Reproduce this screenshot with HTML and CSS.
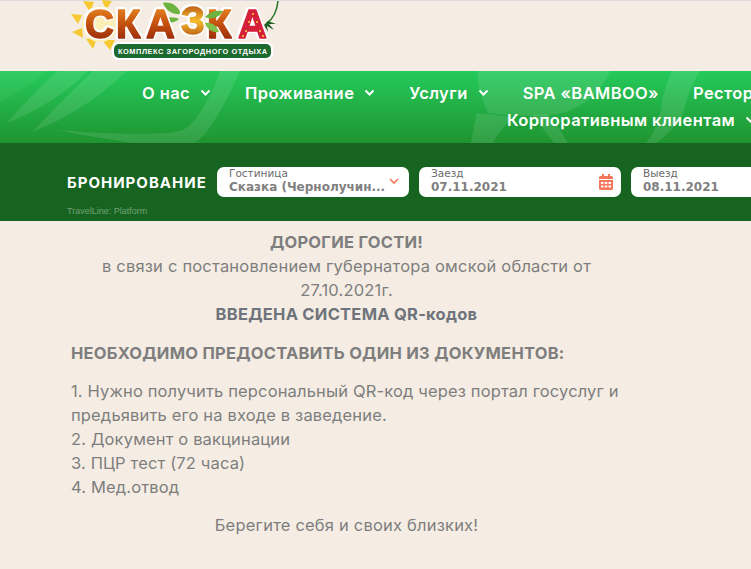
FILE: index.html
```html
<!DOCTYPE html>
<html lang="ru">
<head>
    <meta charset="UTF-8">
    <meta name="viewport" content="width=device-width, initial-scale=1.0">
    <title>Сказка</title>
    <link rel="stylesheet" href="styles.css">
</head>
<body>
    <div class="page">
        <!-- Logo -->
        <header class="top">
            <svg class="logo" width="215" height="64" viewBox="68 0 215 64">
                <defs>
                    <linearGradient id="letter" x1="0" y1="0" x2="0" y2="1">
                        <stop offset="0" stop-color="#f09226"/>
                        <stop offset="0.5" stop-color="#c4500f"/>
                        <stop offset="1" stop-color="#8a1f08"/>
                    </linearGradient>
                    <linearGradient id="three" x1="0" y1="0" x2="0" y2="1">
                        <stop offset="0" stop-color="#a83a10"/>
                        <stop offset="0.5" stop-color="#f5bd2c"/>
                        <stop offset="1" stop-color="#a83a10"/>
                    </linearGradient>
                </defs>
                <!-- sun -->
                <g fill="#f7c830">
                    <path d="M83 1l11 1-4 10z"/>
                    <path d="M102 0l10 1-6 9z"/>
                    <path d="M71 14l11 1-4 9z"/>
                    <path d="M72 32l10-4 1 10z"/>
                    <path d="M86 39l7 10 4-11z"/>
                    <path d="M102 40l8 10 5-10z"/>
                </g>
                <circle cx="100" cy="24" r="18" fill="#fdeeb8"/>
                <!-- branch -->
                <path d="M278 1c-1 10-4 17-11 22" fill="none" stroke="#2f7a2e" stroke-width="1.6"/>
                <path d="M268 21l8 3-7 0 5 6-7-4 1 6-4-7z" fill="#1f5f26"/>
                <!-- leaves behind the З -->
                <path d="M163 3c8-2 15 3 18 11-8 1-15-3-18-11z" fill="#6db33f"/>
                <path d="M163 20c6-4 12-3 16-1-4 4-11 5-16 1z" fill="#6db33f"/>
                <!-- letters -->
                <g class="logo-letters">
                    <text x="85" y="38" fill="url(#letter)" stroke="url(#letter)" textLength="28">С</text>
                    <text x="116" y="38" fill="url(#letter)" stroke="url(#letter)" textLength="27">К</text>
                    <text x="146" y="38" fill="url(#letter)" stroke="url(#letter)" textLength="31">А</text>
                    <text class="logo-three" x="181" y="34" fill="url(#three)" stroke="url(#three)" textLength="22">З</text>
                    <text x="207" y="38" fill="url(#letter)" stroke="url(#letter)" textLength="29">К</text>
                    <text x="238" y="38" fill="#d5203a" stroke="#d5203a" textLength="30">А</text>
                </g>
                <path d="M205 17c6-6 12-7 18-6-3 6-11 9-18 6z" fill="#6db33f"/>
                <path d="M205 23c7-1 12 3 14 9-7 1-12-3-14-9z" fill="#7fc04a"/>
                <g fill="#f6d53c">
                    <circle cx="253" cy="14" r="1"/>
                    <circle cx="249" cy="22" r="1"/>
                    <circle cx="257" cy="22" r="1"/>
                    <circle cx="246" cy="31" r="1"/>
                    <circle cx="260" cy="31" r="1"/>
                    <circle cx="243" cy="36" r="1"/>
                    <circle cx="263" cy="36" r="1"/>
                </g>
                <!-- badge -->
                <rect x="112" y="42" width="161" height="18" rx="6" fill="#fff"/>
                <rect x="114" y="44" width="157" height="14" rx="5" fill="#1d6a30"/>
                <text class="logo-sub" x="118" y="54" textLength="149">КОМПЛЕКС ЗАГОРОДНОГО ОТДЫХА</text>
            </svg>
        </header>

        <!-- Menu -->
        <nav class="menu">
            <svg class="menu-leaves" width="751" height="72" viewBox="0 0 751 72">
                <g fill="#fff" fill-opacity="0.1">
                    <path d="M0 0H48C30 14 14 24 0 32z" fill-opacity="0.05"/>
                    <path d="M7 52C26 30 42 14 58 0h30C66 22 38 40 7 52z"/>
                    <path d="M32 61C54 38 74 18 93 0h34C100 26 66 48 32 61z"/>
                    <path d="M57 59c50 4 110 6 126 0 8-4 14-12 20-22 8-14 14-26 17-37h20c-8 18-18 38-26 50-6 10-12 18-20 22h-62C108 68 80 64 57 59z"/>
                    <path d="M478 0h132c-8 20-28 40-58 44-24 2-48 0-64-2-6-14-12-28-10-42z"/>
                    <path d="M471 72c2-12 4-22 6-30l36 4c-8 8-16 18-20 26z"/>
                    <path d="M532 44c8 10 16 20 22 28h14c-6-10-12-20-20-29z"/>
                    <path d="M672 0h28c-8 14-14 28-16 40-4 10-16 24-28 32h-10c8-10 14-22 16-40 2-12 6-24 10-32z"/>
                </g>
            </svg>
            <ul class="menu-row menu-row-first">
                <li class="menu-item">О нас <svg class="chev" width="11" height="8" viewBox="0 0 11 8"><path d="M1.500 1.500l4 4 4-4" fill="none" stroke="#fff" stroke-width="2"/></svg></li>
                <li class="menu-item">Проживание <svg class="chev" width="11" height="8" viewBox="0 0 11 8"><path d="M1.500 1.500l4 4 4-4" fill="none" stroke="#fff" stroke-width="2"/></svg></li>
                <li class="menu-item">Услуги <svg class="chev" width="11" height="8" viewBox="0 0 11 8"><path d="M1.500 1.500l4 4 4-4" fill="none" stroke="#fff" stroke-width="2"/></svg></li>
                <li class="menu-item">SPA «BAMBOO»</li>
                <li class="menu-item">Ресторан</li>
            </ul>
            <ul class="menu-row menu-row-second">
                <li class="menu-item">Корпоративным клиентам <svg class="chev" width="11" height="8" viewBox="0 0 11 8"><path d="M1.500 1.500l4 4 4-4" fill="none" stroke="#fff" stroke-width="2"/></svg></li>
            </ul>
        </nav>

        <!-- Booking -->
        <section class="booking">
            <div class="booking-row">
                <div class="booking-title">БРОНИРОВАНИЕ</div>
                <div class="field field-hotel">
                    <div class="field-label">Гостиница</div>
                    <div class="field-value">Сказка (Чернолучин...</div>
                    <svg class="field-icon" width="10" height="7" viewBox="0 0 10 7"><path d="M1 1l4 4 4-4" fill="none" stroke="#f4775a" stroke-width="1.600"/></svg>
                </div>
                <div class="field field-in">
                    <div class="field-label">Заезд</div>
                    <div class="field-value">07.11.2021</div>
                    <svg class="field-icon" width="14" height="16" viewBox="0 0 14 16">
                        <path fill="#f4775a" d="M3 0h2v2h4V0h2v2h1.500A1.500 1.500 0 0 1 14 3.500V5H0V3.500A1.500 1.500 0 0 1 1.500 2H3zM0 6h14v8.500a1.500 1.500 0 0 1-1.500 1.500h-11A1.500 1.500 0 0 1 0 14.500z"/>
                        <path fill="#fff" d="M2 8h2.500v2H2zM5.800 8h2.500v2H5.800zM9.500 8H12v2H9.500zM2 11.500h2.500v2H2zM5.800 11.500h2.500v2H5.800zM9.500 11.500H12v2H9.500z"/>
                    </svg>
                </div>
                <div class="field field-out">
                    <div class="field-label">Выезд</div>
                    <div class="field-value">08.11.2021</div>
                </div>
            </div>
            <div class="booking-credit">TravelLine: Platform</div>
        </section>

        <!-- Notice -->
        <main class="notice">
            <p class="center"><b>ДОРОГИЕ ГОСТИ!</b><br>в связи с постановлением губернатора омской области от 27.10.2021г.<br><b class="accent">ВВЕДЕНА СИСТЕМА QR-кодов</b></p>
            <p class="docs-title"><b>НЕОБХОДИМО ПРЕДОСТАВИТЬ ОДИН ИЗ ДОКУМЕНТОВ:</b></p>
            <p class="docs-list">1. Нужно получить персональный QR-код через портал госуслуг и предьявить его на входе в заведение.<br>2. Документ о вакцинации<br>3. ПЦР тест (72 часа)<br>4. Мед.отвод</p>
            <p class="center">Берегите себя и своих близких!</p>
        </main>
    </div>
</body>
</html>
```

FILE: styles.css
```css
html, body {
    margin: 0;
    padding: 0;
}
body {
    background-color: #f5ede3;
    color: #7e7e7e;
    font-family: Inter, "Noto Sans", sans-serif;
}
.page {
    width: 751px;
    height: 569px;
    overflow: hidden;
}
.top {
    height: 70px;
    padding-left: 68px;
    border-top: 1px solid #dcdcdc;
}
.logo {
    display: block;
    margin-top: -1px;
}
.logo-letters {
    font-family: "Liberation Sans", sans-serif;
    font-weight: 700;
    font-size: 40px;
    stroke-width: 1.500px;
    stroke-linejoin: round;
    filter: drop-shadow(1.500px 0 0 #fff) drop-shadow(-1.500px 0 0 #fff) drop-shadow(0 1.500px 0 #fff) drop-shadow(0 -1.500px 0 #fff);
}
.logo-three {
    font-size: 38px;
}
.logo-sub {
    font-family: "Liberation Sans", sans-serif;
    font-weight: 700;
    font-size: 7.400px;
    fill: #fff;
}

/* menu */
.menu {
    position: relative;
    height: 72px;
    overflow: hidden;
    background: linear-gradient(#25ca5c, #1f9430);
}
.menu-leaves {
    position: absolute;
    left: 0;
    top: 0;
}
.menu-row {
    position: relative;
    display: flex;
    margin: 0;
    list-style: none;
    white-space: nowrap;
}
.menu-row-first {
    gap: 34px;
    padding: 11px 0 0 142px;
}
.menu-row-second {
    padding: 5px 0 0 507px;
}
.menu-item {
    display: flex;
    align-items: center;
    gap: 10px;
    color: #fff;
    font-size: 16.500px;
    font-weight: 600;
    letter-spacing: 0.4px;
    line-height: 22px;
}

/* booking */
.booking {
    height: 78px;
    background-color: #16641f;
}
.booking-row {
    display: flex;
    align-items: center;
    gap: 10px;
    padding: 24px 0 0 67px;
}
.booking-title {
    flex: none;
    width: 140px;
    color: #fff;
    font-size: 15px;
    font-weight: 700;
    letter-spacing: 1px;
    white-space: nowrap;
}
.field {
    position: relative;
    flex: none;
    box-sizing: border-box;
    height: 30px;
    padding: 0 12px;
    background-color: #fff;
    border-radius: 7px;
    font-family: "DejaVu Sans", sans-serif;
    color: #808080;
}
.field-hotel {
    width: 192px;
}
.field-in, .field-out {
    width: 202px;
}
.field-label {
    font-size: 10.500px;
    line-height: 12px;
    color: #6a6a6a;
}
.field-value {
    font-size: 12px;
    font-weight: 700;
    line-height: 14px;
    padding-top: 1px;
    white-space: nowrap;
}
.field-icon {
    position: absolute;
    right: 10px;
    top: 11px;
}
.field-in .field-icon {
    right: 8px;
    top: 7px;
}
.booking-credit {
    padding: 9px 0 0 67px;
    color: #74a276;
    font-family: "Liberation Sans", sans-serif;
    font-size: 9px;
    line-height: 10px;
}

/* notice */
.notice {
    width: 551px;
    padding: 9px 0 0 71px;
    font-size: 16.500px;
    letter-spacing: 0.2px;
    line-height: 24px;
}
.notice p {
    margin: 0 0 15px;
}
.notice b {
    font-weight: 700;
    letter-spacing: 0.25px;
}
.center {
    text-align: center;
}
.notice .accent {
    color: #6f747c;
}
.notice .docs-title {
    margin-bottom: 14px;
}
.notice .docs-list {
    margin-bottom: 14px;
    letter-spacing: 0.15px;
}
```
